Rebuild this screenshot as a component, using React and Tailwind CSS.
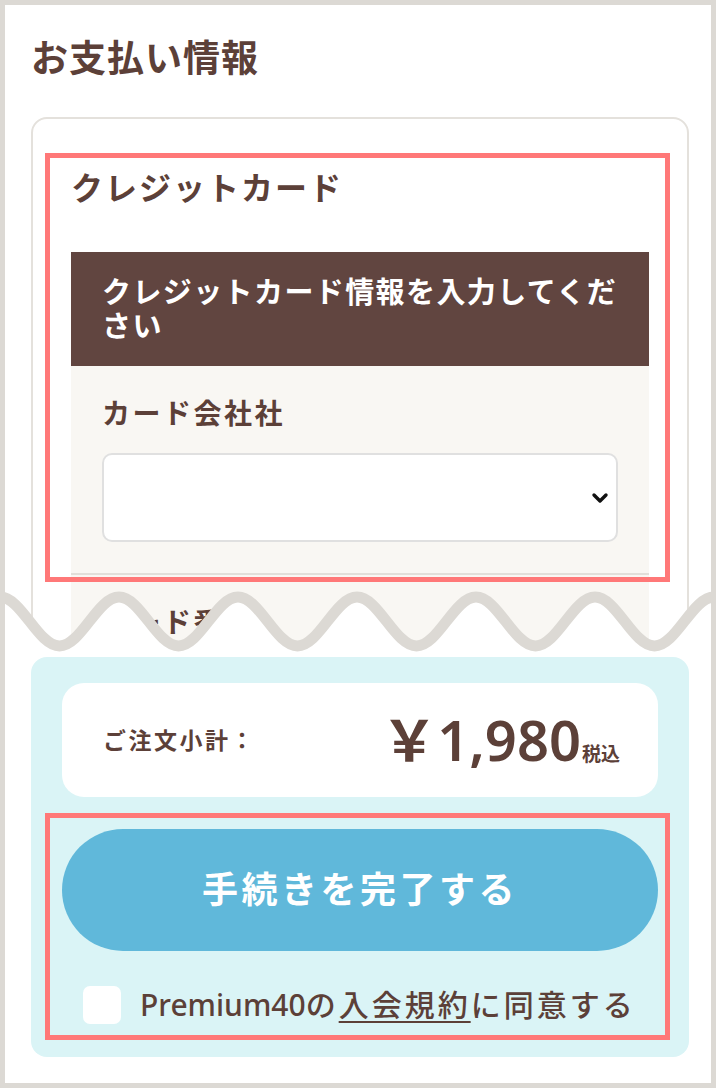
import React from "react";

const brown = "text-[#5c4038]";

// wave that cuts the long form off; crest every 119px
const wavePath = () => {
  const w = 119;
  const top = 12;
  const bottom = 61;
  let d = `M0,${top}`;
  for (let i = 0; i < 14; i++) {
    const x0 = (i * w) / 2;
    const x1 = ((i + 1) * w) / 2;
    const y0 = i % 2 === 0 ? top : bottom;
    const y1 = i % 2 === 0 ? bottom : top;
    const k = (w / 2) * 0.36;
    d += ` C${x0 + k},${y0} ${x1 - k},${y1} ${x1},${y1}`;
  }
  return d;
};

const Wave = () => {
  const d = wavePath();
  return (
    <svg
      className="absolute left-0 top-[585px]"
      width="716"
      height="71"
      viewBox="0 0 716 71"
    >
      <clipPath id="panel">
        <rect x="5" y="0" width="706" height="71" />
      </clipPath>
      <path d={`${d} L833,71 L0,71 Z`} fill="#ffffff" clipPath="url(#panel)" />
      <path d={d} fill="none" stroke="#dcd9d4" strokeWidth="11" />
    </svg>
  );
};

const Chevron = () => (
  <svg width="18" height="12" viewBox="0 0 18 12" className="absolute right-[7px] top-1/2 -translate-y-1/2">
    <path d="M3 3 L9 9 L15 3" fill="none" stroke="#111" strokeWidth="3.4" strokeLinecap="round" strokeLinejoin="round" />
  </svg>
);

export default function App() {
  return (
    <div className="relative w-[716px] h-[1088px] bg-[#dcd9d4] p-[5px] font-['Noto_Sans','Noto_Sans_CJK_JP',sans-serif]">
      <div className="h-[1078px] bg-white">
        {/* upper part: payment form, cut by the wave */}
        <div className="h-[645px] overflow-hidden pl-[26px] pr-[22px]">
          <h1 className={`pt-[30px] text-[37px] leading-[46px] font-bold tracking-[1px] ${brown}`}>
            お支払い情報
          </h1>
          <div className="mt-[36px] rounded-[16px] border-2 border-[#e4e1dc] px-[38px] pt-[47px] pb-[40px]">
            <h2 className={`text-[32px] leading-[44px] font-bold tracking-[2px] ${brown}`}>
              クレジットカード
            </h2>
            <div className="mt-[42px]">
              <div className="bg-[#614540] pl-[31px] pr-[24px] py-[23px] text-[29px] leading-[34px] font-bold tracking-[1.4px] text-white">
                クレジットカード情報を入力してください
              </div>
              <div className="bg-[#f9f7f3]">
                <div className="px-[31px] pt-[27px] pb-[31px] border-b-2 border-[#e2dfda]">
                  <div className={`text-[28px] leading-[40px] font-bold tracking-[2.5px] ${brown}`}>
                    カード会社社
                  </div>
                  <div className="relative mt-[20px] h-[89px] rounded-[10px] border-2 border-[#e0e0e0] bg-white">
                    <select className="h-full w-full appearance-none bg-transparent outline-none" />
                    <Chevron />
                  </div>
                </div>
                <div className="px-[31px] pt-[27px] pb-[31px]">
                  <div className={`text-[28px] leading-[40px] font-bold tracking-[2.5px] ${brown}`}>
                    カード番号
                  </div>
                </div>
              </div>
            </div>
          </div>
        </div>

        {/* order summary */}
        <div className="ml-[26px] mr-[22px] mt-[7px] h-[400px] rounded-[16px] bg-[#daf4f6] px-[31px] pt-[26px]">
          <div className="flex h-[114px] items-center justify-between rounded-[22px] bg-white pl-[41px] pr-[38px]">
            <span className={`text-[23px] font-bold tracking-[2.5px] ${brown}`}>ご注文小計：</span>
            <span className={`flex items-baseline ${brown}`}>
              <span className="text-[56px] font-semibold leading-none">￥1,980</span>
              <span className="ml-[1px] text-[19px] font-bold">税込</span>
            </span>
          </div>
          <button className="mt-[32px] flex h-[122px] w-full items-center justify-center rounded-full bg-[#60b8da] text-[36px] font-bold tracking-[3.5px] text-white">
            手続きを完了する
          </button>
          <label className="mt-[31px] ml-[21px] flex items-center gap-[19px]">
            <span className="h-[38px] w-[38px] shrink-0 rounded-[7px] bg-white" />
            <span className={`text-[30px] font-medium tracking-[3px] whitespace-nowrap ${brown}`}>
              <span className="tracking-[0px]">Premium40</span>の<span className="underline underline-offset-[5px] decoration-2">入会規約</span>に同意する
            </span>
          </label>
        </div>
      </div>

      <Wave />

      {/* highlight boxes */}
      <div className="pointer-events-none absolute left-[45px] top-[153px] h-[429px] w-[625px] border-[5px] border-[#ff7878]" />
      <div className="pointer-events-none absolute left-[45px] top-[813px] h-[227px] w-[625px] border-[5px] border-[#ff7878]" />
    </div>
  );
}
